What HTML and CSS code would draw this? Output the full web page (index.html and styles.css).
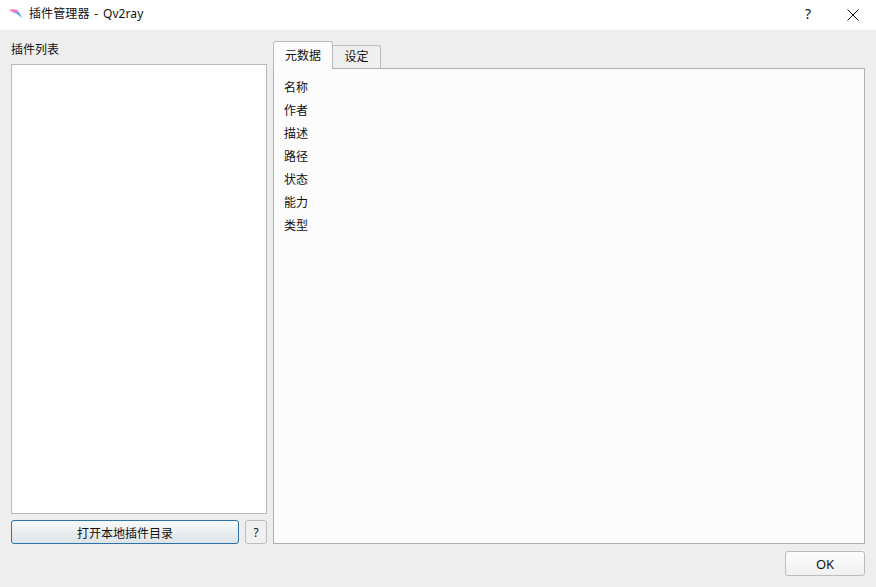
FILE: index.html
```html
<!DOCTYPE html>
<html lang="zh">
<head>
<meta charset="utf-8">
<title>插件管理器 - Qv2ray</title>
<link rel="stylesheet" href="styles.css">
</head>
<body>
<div class="window">
  <header class="titlebar">
    <svg class="logo" width="13" height="10" viewBox="0 0 13 10">
      <path d="M0 1 C3 -0.3 7 -0.2 9.5 2 L8.5 4 C6 3.6 3 3.2 0 1Z" fill="#f777ae"/>
      <path d="M3.5 3 C6 2.4 8.5 2.4 10 3.4 L9 5 C7 4.4 5 4 3.5 3Z" fill="#b795ec"/>
      <path d="M7 4 L9.5 3 C11 4.5 12 6.5 12.6 9 C10.8 7.2 9 5.4 7 4Z" fill="#4f9bf5"/>
    </svg>
    <span class="title">插件管理器 - Qv2ray</span>
    <span class="help">?</span>
    <svg class="close" width="12" height="12" viewBox="0 0 12 12"><path d="M.5.5l11 11M11.5.5l-11 11" stroke="#111" stroke-width="1" fill="none"/></svg>
  </header>
  <main class="content">
    <div class="columns">
      <section class="left">
        <div class="list-label">插件列表</div>
        <div class="list"></div>
        <div class="left-actions">
          <button class="btn primary">打开本地插件目录</button>
          <button class="btn small">?</button>
        </div>
      </section>
      <section class="right">
        <div class="tabs">
          <div class="tab active">元数据</div>
          <div class="tab">设定</div>
        </div>
        <div class="panel">
          <div class="row">名称</div>
          <div class="row">作者</div>
          <div class="row">描述</div>
          <div class="row">路径</div>
          <div class="row">状态</div>
          <div class="row">能力</div>
          <div class="row">类型</div>
        </div>
      </section>
    </div>
    <div class="footer"><button class="btn ok">OK</button></div>
  </main>
</div>
</body>
</html>
```
FILE: styles.css
```css
* { box-sizing: border-box; }
html, body { margin: 0; padding: 0; }
body {
  width: 876px;
  height: 587px;
  overflow: hidden;
  font-family: "Noto Sans CJK SC", "Liberation Sans", sans-serif;
  font-size: 12px;
  color: #111;
  background: #eeeeee;
}
.window { display: flex; flex-direction: column; height: 587px; }
.titlebar {
  height: 30px;
  background: #fff;
  display: flex;
  align-items: center;
  padding-left: 9px;
  flex: none;
}
.logo { flex: none; margin-right: 7px; margin-top: -2px; }
.title { flex: 1; font-size: 12px; line-height: 28px; height: 30px; word-spacing: 1.5px; letter-spacing: 0.1px; font-family: "Noto Sans", "Noto Sans CJK SC", sans-serif; }
.help { font-size: 14px; width: 12px; margin-right: 30px; line-height: 28px; height: 30px; font-family: "Noto Sans", sans-serif; }
.close { margin-right: 17px; flex: none; }
.content { flex: 1; display: flex; flex-direction: column; padding: 11px; min-height: 0; }
.columns { display: flex; gap: 6px; height: 503px; flex: none; }
.left { width: 256px; display: flex; flex-direction: column; flex: none; }
.list-label { height: 24px; line-height: 15px; }
.list { height: 450px; background: #fff; border: 1px solid #b9b9b9; flex: none; }
.left-actions { display: flex; gap: 6px; margin-top: 6px; height: 25px; }
.btn {
  font-family: "Noto Sans CJK SC", "Liberation Sans", sans-serif;
  font-size: 12px;
  color: #111;
  border-radius: 3px;
  padding: 0;
  border: 1px solid #bcbcbc;
  background: linear-gradient(#fdfdfd, #f0f0f0);
}
.primary { width: 228px; border-color: #2a74a8; background: linear-gradient(#f8fafb, #dde3e8); }
.small { width: 22px; height: 24px; background: #f0f0f0; font-family: "Noto Sans", sans-serif; }
.right { flex: 1; display: flex; flex-direction: column; min-width: 0; }
.tabs { display: flex; height: 28px; flex: none; align-items: flex-end; position: relative; z-index: 1; margin-bottom: -1px; }
.tab {
  width: 48px;
  height: 24px;
  border: 1px solid #bcbcbc;
  border-bottom: 1px solid #b0b0b0;
  border-left: 0;
  border-radius: 0 3px 0 0;
  background: #efefef;
  text-align: center;
  line-height: 20px;
}
.tab.active {
  width: 60px;
  height: 28px;
  border-left: 1px solid #bcbcbc;
  border-bottom: 0;
  border-radius: 3px 3px 0 0;
  background: #fcfcfc;
  line-height: 26px;
}
.panel {
  flex: 1;
  background: #fcfcfc;
  border: 1px solid #b0b0b0;
  padding: 8px 10px;
}
.row { height: 23px; line-height: 20px; }
.footer { display: flex; justify-content: flex-end; margin-top: 7px; }
.ok { width: 80px; height: 25px; font-size: 13px; font-family: "Noto Sans", sans-serif; }
```
